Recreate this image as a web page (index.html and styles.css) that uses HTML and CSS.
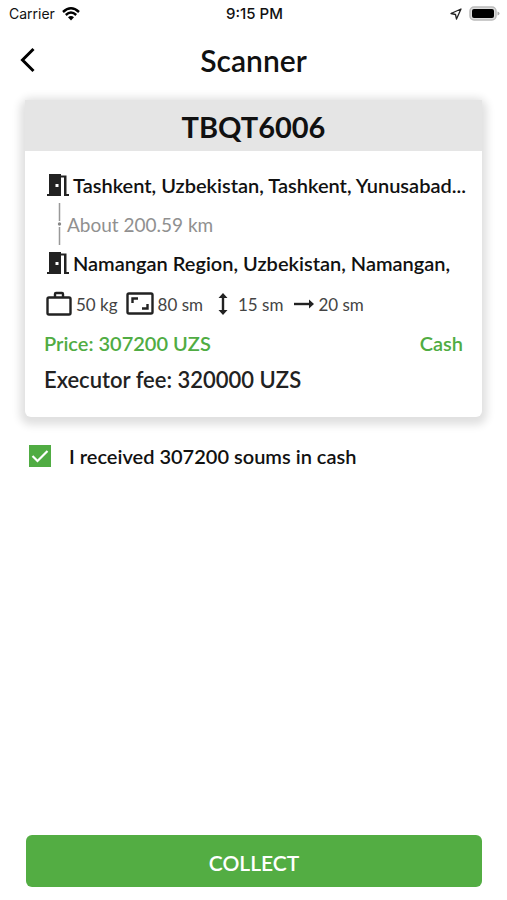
FILE: index.html
```html
<!DOCTYPE html>
<html lang="en">
<head>
<meta charset="utf-8">
<meta name="viewport" content="width=device-width, initial-scale=1">
<title>Scanner</title>
<link rel="stylesheet" href="styles.css">
</head>
<body>
<svg class="defs" aria-hidden="true">
  <symbol id="door" viewBox="0 0 22 24">
    <path d="M2 1H14V2.500H19.500V21H22V23H17V4.500H14V23H0V21H2Z"/>
    <rect class="knob" x="8.500" y="11" width="3" height="3"/>
  </symbol>
</svg>
<div class="screen">
  <div class="status">
    <div class="carrier">
      <span>Carrier</span>
      <svg width="18" height="14" viewBox="0 0 18 14" aria-hidden="true">
        <g fill="none" stroke="#000" stroke-width="2.400">
          <path d="M1 5Q9-2.400 17 5"/>
          <path d="M3.800 8Q9 3.200 14.200 8"/>
        </g>
        <path d="M6 10.300Q9 7.700 12 10.300L9 13.500Z"/>
      </svg>
    </div>
    <time class="clock">9:15 PM</time>
    <div class="power">
      <svg width="12" height="12" viewBox="0 0 12 12" aria-hidden="true">
        <path d="M11 1L1 5.500L5.500 6.500L6.500 11Z" fill="none" stroke="#222" stroke-width="1.300" stroke-linejoin="round"/>
      </svg>
      <svg width="31" height="16" viewBox="0 0 31 16" aria-hidden="true">
        <rect x="1" y="1" width="26" height="13" rx="4" fill="#ddd" stroke="#bbb" stroke-width="1.500"/>
        <rect x="3" y="3" width="22" height="9" rx="2"/>
        <path d="M28.500 5.500Q30.500 6 30.500 7.500Q30.500 9 28.500 9.500Z" fill="#aaa"/>
      </svg>
    </div>
  </div>

  <header class="topbar">
    <button class="back" type="button" aria-label="Back">
      <svg width="16" height="26" viewBox="0 0 16 26" aria-hidden="true">
        <path d="M13.500 2L2.500 13L13.500 24" fill="none" stroke="#000" stroke-width="3"/>
      </svg>
    </button>
    <h1>Scanner</h1>
  </header>

  <main>
    <section class="card">
      <h2>TBQT6006</h2>
      <div class="details">
        <div class="address">
          <svg class="door" aria-hidden="true"><use href="#door"/></svg>
          <span>Tashkent, Uzbekistan, Tashkent, Yunusabad...</span>
        </div>
        <div class="distance">
          <svg width="5" height="42" viewBox="0 0 5 42" aria-hidden="true">
            <path d="M2.500 0V18M2.500 24V42" stroke="#999" stroke-width="1.500"/>
            <circle cx="2.500" cy="21" r="1.700" fill="#888"/>
          </svg>
          <span>About 200.59 km</span>
        </div>
        <div class="address">
          <svg class="door" aria-hidden="true"><use href="#door"/></svg>
          <span>Namangan Region, Uzbekistan, Namangan,</span>
        </div>
        <ul class="specs">
          <li>
            <svg width="26" height="26" viewBox="0 0 26 26" aria-hidden="true">
              <g fill="none" stroke="#222" stroke-width="2.400">
                <rect x="1.500" y="6.500" width="23" height="17" rx="1.500"/>
                <path d="M9 7V3Q9 2 10 2H16Q17 2 17 3V7"/>
              </g>
            </svg>
            50 kg
          </li>
          <li>
            <svg width="28" height="24" viewBox="0 0 28 24" aria-hidden="true">
              <g fill="none" stroke="#222" stroke-width="2.400">
                <rect x="1.500" y="1.500" width="25" height="20" rx="1.500"/>
                <path d="M6.500 11V6.500H12M16 16.500H21.500V12"/>
              </g>
            </svg>
            80 sm
          </li>
          <li class="tall">
            <svg width="10" height="24" viewBox="0 0 10 24" aria-hidden="true">
              <path d="M5 3V21" stroke="#222" stroke-width="2.400"/>
              <path d="M5 1L9.500 6H.5ZM5 23L9.500 18H.5Z" fill="#222"/>
            </svg>
            15 sm
          </li>
          <li>
            <svg width="20" height="12" viewBox="0 0 20 12" aria-hidden="true">
              <path d="M0 6H17" stroke="#222" stroke-width="2.400"/>
              <path d="M20 6L15 1.500V10.500Z" fill="#222"/>
            </svg>
            20 sm
          </li>
        </ul>
        <div class="price">
          <span>Price: 307200 UZS</span>
          <span>Cash</span>
        </div>
        <p class="fee">Executor fee: 320000 UZS</p>
      </div>
    </section>

    <label class="confirm">
      <input type="checkbox" checked>
      <span class="box">
        <svg width="22" height="22" viewBox="0 0 22 22" aria-hidden="true">
          <path d="M3.500 11L8.500 16L18.500 6" fill="none" stroke="#fff" stroke-width="2.200"/>
        </svg>
      </span>
      <span>I received 307200 soums in cash</span>
    </label>
  </main>

  <button class="collect" type="button">COLLECT</button>
</div>
</body>
</html>
```
FILE: styles.css
```css
* {
  box-sizing: border-box;
}

body {
  margin: 0;
  background: #fff;
  color: #111;
  font-family: Lato, sans-serif;
  font-weight: 600;
}

h1, h2, p, ul {
  margin: 0;
  padding: 0;
}

svg {
  display: block;
  flex: none;
}

button {
  border: 0;
  padding: 0;
  font: inherit;
  cursor: pointer;
}

.defs {
  position: absolute;
  width: 0;
  height: 0;
}

.screen {
  display: flex;
  flex-direction: column;
  min-height: 100vh;
}

.status {
  display: grid;
  grid-template-columns: 1fr auto 1fr;
  align-items: center;
  height: 28px;
  padding: 0 7px 0 9px;
  font: 400 14px/28px Inter, sans-serif;
}

.carrier, .power {
  display: flex;
  align-items: center;
  gap: 7px;
}

.power {
  justify-content: flex-end;
}

.clock {
  font-size: 15px;
  font-weight: 500;
}

.topbar {
  display: grid;
  grid-template-columns: 1fr auto 1fr;
  align-items: center;
  height: 64px;
  padding: 0 20px;
}

.back {
  justify-self: start;
  background: none;
}

.topbar h1 {
  font-size: 30px;
  font-weight: 600;
  line-height: 64px;
}

main {
  flex: 1;
  padding: 8px 25px 0;
}

.card {
  border-radius: 6px;
  background: #fff;
  box-shadow: 0 3px 8px 5px #e0e0e0;
}

.card h2 {
  padding-top: 3px;
  background: #e5e5e5;
  font-size: 29px;
  font-weight: 700;
  line-height: 48px;
  text-align: center;
}

.details {
  padding: 16px 14px 16px 19px;
}

.address {
  display: flex;
  align-items: center;
  gap: 4px;
  height: 36px;
  padding-left: 3px;
  font-size: 20px;
  line-height: 24px;
  white-space: nowrap;
}

.door {
  width: 22px;
  height: 24px;
  fill: #222;
}

.knob {
  fill: #fff;
}

.distance {
  display: flex;
  align-items: center;
  gap: 5px;
  padding-left: 13px;
  color: #909090;
  font-size: 19px;
  font-weight: 400;
}

.specs {
  display: flex;
  align-items: center;
  gap: 8px;
  height: 46px;
  padding-left: 2px;
  color: #444;
  font-size: 17px;
  font-weight: 400;
  list-style: none;
}

.specs li {
  display: flex;
  align-items: center;
  gap: 4px;
}

.specs .tall {
  gap: 10px;
  padding: 0 3px 0 7px;
}

.price {
  display: flex;
  justify-content: space-between;
  padding-right: 5px;
  color: #50ac43;
  font-size: 20px;
  line-height: 32px;
}

.fee {
  color: #222;
  font-size: 22px;
  line-height: 42px;
}

.confirm {
  display: flex;
  align-items: center;
  gap: 18px;
  width: fit-content;
  margin-top: 27px;
  padding-left: 4px;
  font-size: 20px;
  line-height: 24px;
}

.confirm input {
  position: absolute;
  opacity: 0;
}

.box {
  background: #50ac43;
}

.confirm input:not(:checked) + .box {
  background: #fff;
  box-shadow: inset 0 0 0 2px #50ac43;
}

.collect {
  height: 52px;
  margin: 0 25px 13px 26px;
  padding-top: 2px;
  border-radius: 6px;
  background: #53ad43;
  color: #fff;
  font-size: 21px;
}
```
